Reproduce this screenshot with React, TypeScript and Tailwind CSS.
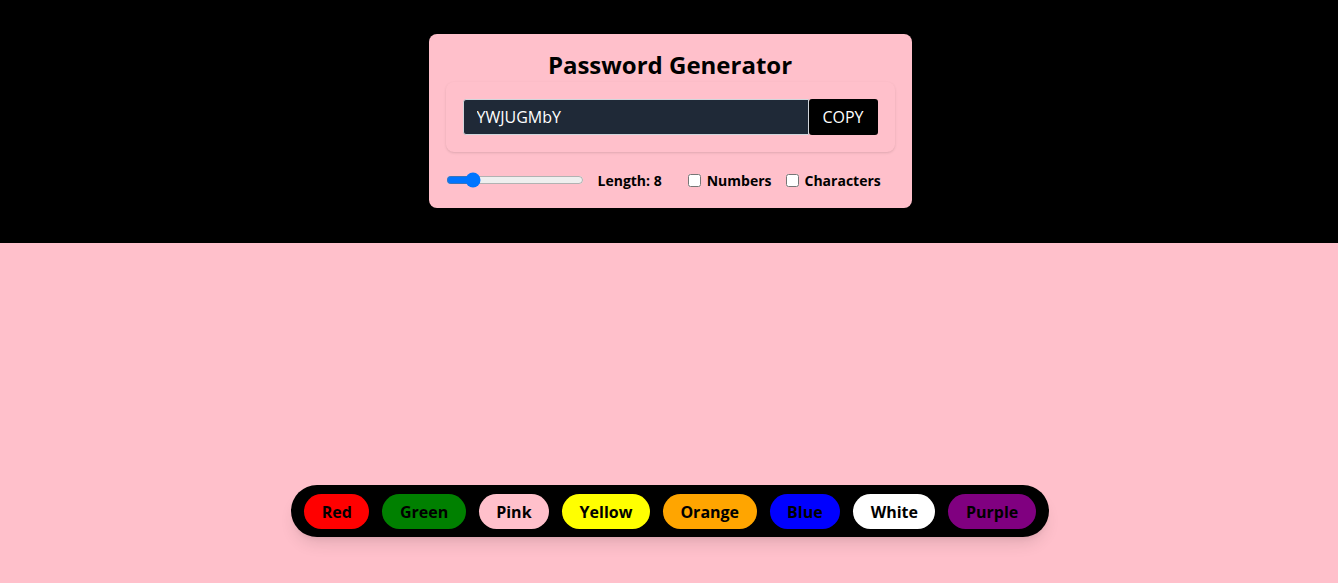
import { useState } from 'react'

const COLORS = [
  { name: 'Red', bg: 'bg-[#ff0000]' },
  { name: 'Green', bg: 'bg-[#008000]' },
  { name: 'Pink', bg: 'bg-[#ffc0cb]' },
  { name: 'Yellow', bg: 'bg-[#ffff00]' },
  { name: 'Orange', bg: 'bg-[#ffa500]' },
  { name: 'Blue', bg: 'bg-[#0000ff]' },
  { name: 'White', bg: 'bg-white' },
  { name: 'Purple', bg: 'bg-[#800080]' },
]

export default function App() {
  const [length, setLength] = useState(8)
  const [numbers, setNumbers] = useState(false)
  const [chars, setChars] = useState(false)
  const [bg, setBg] = useState('bg-[#ffc0cb]')

  return (
    <div className={`w-full h-[583px] ${bg} font-['Open_Sans',sans-serif]`}>
      {/* password generator */}
      <div className="bg-black h-[243px] pt-[34px]">
        <div className="w-[483px] mx-auto translate-x-[1px] rounded-lg bg-[#ffc0cb] px-[17px] pt-[15px] pb-[16px]">
          <h1 className="text-center text-[24px] leading-[32px] font-bold text-black">Password Generator</h1>
          <div className="mt-[1px] rounded-lg shadow-sm px-[17px] py-[17px] flex">
            <input
              type="text"
              value="YWJUGMbY"
              readOnly
              className="h-[36px] flex-1 bg-[#1f2937] text-white text-[16px] px-[13px] border border-[#d1d5db] rounded-l-[3px] outline-none"
            />
            <button className="h-[36px] w-[69px] bg-black text-white text-[16px] rounded-[3px]">COPY</button>
          </div>
          <div className="mt-[16px] flex items-center text-[14px] font-bold text-black h-[24px]">
            <input
              type="range"
              min={0}
              max={50}
              value={length}
              onChange={(e) => setLength(Number(e.target.value))}
              className="w-[138px] cursor-pointer"
            />
            <span className="ml-[14px]">Length: {length}</span>
            <label className="ml-[26px] flex items-center gap-[6px]">
              <input type="checkbox" checked={numbers} onChange={() => setNumbers(!numbers)} className="w-[13px] h-[13px]" />
              Numbers
            </label>
            <label className="ml-[14px] flex items-center gap-[6px]">
              <input type="checkbox" checked={chars} onChange={() => setChars(!chars)} className="w-[13px] h-[13px]" />
              Characters
            </label>
          </div>
        </div>
      </div>

      {/* colour switcher */}
      <div className="flex justify-center mt-[242px]">
        <div className="flex gap-[13px] bg-black rounded-full px-[13px] pt-[9px] pb-[8px] shadow-lg translate-x-[1px]">
          {COLORS.map((c) => (
            <button
              key={c.name}
              onClick={() => setBg(c.bg)}
              className={`${c.bg} text-black h-[35px] px-[17.5px] rounded-full text-[16px] font-bold`}
            >
              {c.name}
            </button>
          ))}
        </div>
      </div>
    </div>
  )
}
